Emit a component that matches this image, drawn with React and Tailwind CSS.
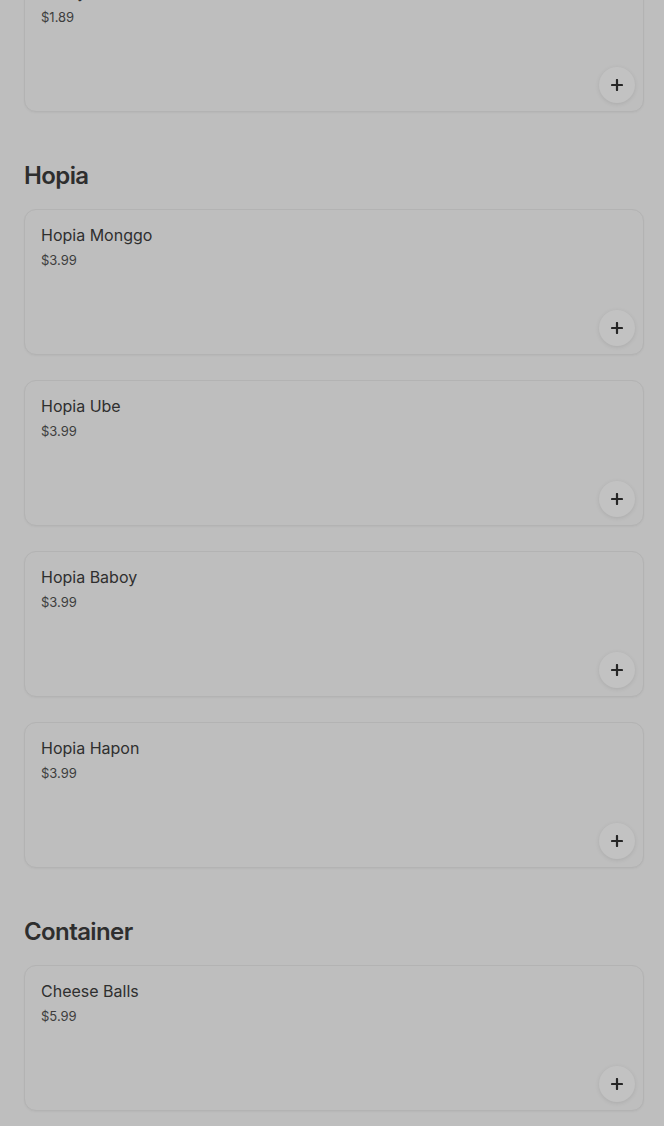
import React from "react";

const sections = [
  {
    title: null,
    items: [{ name: "Ensaymada", price: "$1.89" }],
  },
  {
    title: "Hopia",
    items: [
      { name: "Hopia Monggo", price: "$3.99" },
      { name: "Hopia Ube", price: "$3.99" },
      { name: "Hopia Baboy", price: "$3.99" },
      { name: "Hopia Hapon", price: "$3.99" },
    ],
  },
  {
    title: "Container",
    items: [{ name: "Cheese Balls", price: "$5.99" }],
  },
];

function PlusIcon() {
  return (
    <svg width="12" height="12" viewBox="0 0 12 12" fill="none">
      <path d="M6 1v10M1 6h10" stroke="#262626" strokeWidth="2.2" strokeLinecap="round" />
    </svg>
  );
}

function ItemCard({ item }) {
  return (
    <div className="flex h-[146px] flex-col rounded-xl border border-[#b3b3b3] bg-[#bebebe] pl-4 pr-2 pt-[14px] pb-2 shadow-[0_1px_2px_rgba(0,0,0,0.04)]">
      <p className="text-[16px] leading-[22px] text-[#2f2f2f]">{item.name}</p>
      <p className="mt-1 text-[13px] leading-5 text-[#3d3d3d]">{item.price}</p>
      {/* add button */}
      <button className="mt-auto flex h-9 w-9 items-center justify-center self-end rounded-full bg-[#c2c2c2] shadow-[0_1px_4px_rgba(0,0,0,0.1)]">
        <PlusIcon />
      </button>
    </div>
  );
}

export default function App() {
  return (
    <div className="min-h-screen bg-[#bebebe] pl-6 pr-5 pb-6 font-['Inter',sans-serif]">
      {sections.map((section, i) => (
        <section key={i} className={i === 0 ? "-mt-[34px]" : ""}>
          {section.title && (
            <h2 className="mt-12 mb-[17px] text-2xl leading-8 font-semibold tracking-tight text-[#2e2e2e]">
              {section.title}
            </h2>
          )}
          <div className="flex flex-col gap-[25px]">
            {section.items.map((item) => (
              <ItemCard key={item.name} item={item} />
            ))}
          </div>
        </section>
      ))}
    </div>
  );
}
